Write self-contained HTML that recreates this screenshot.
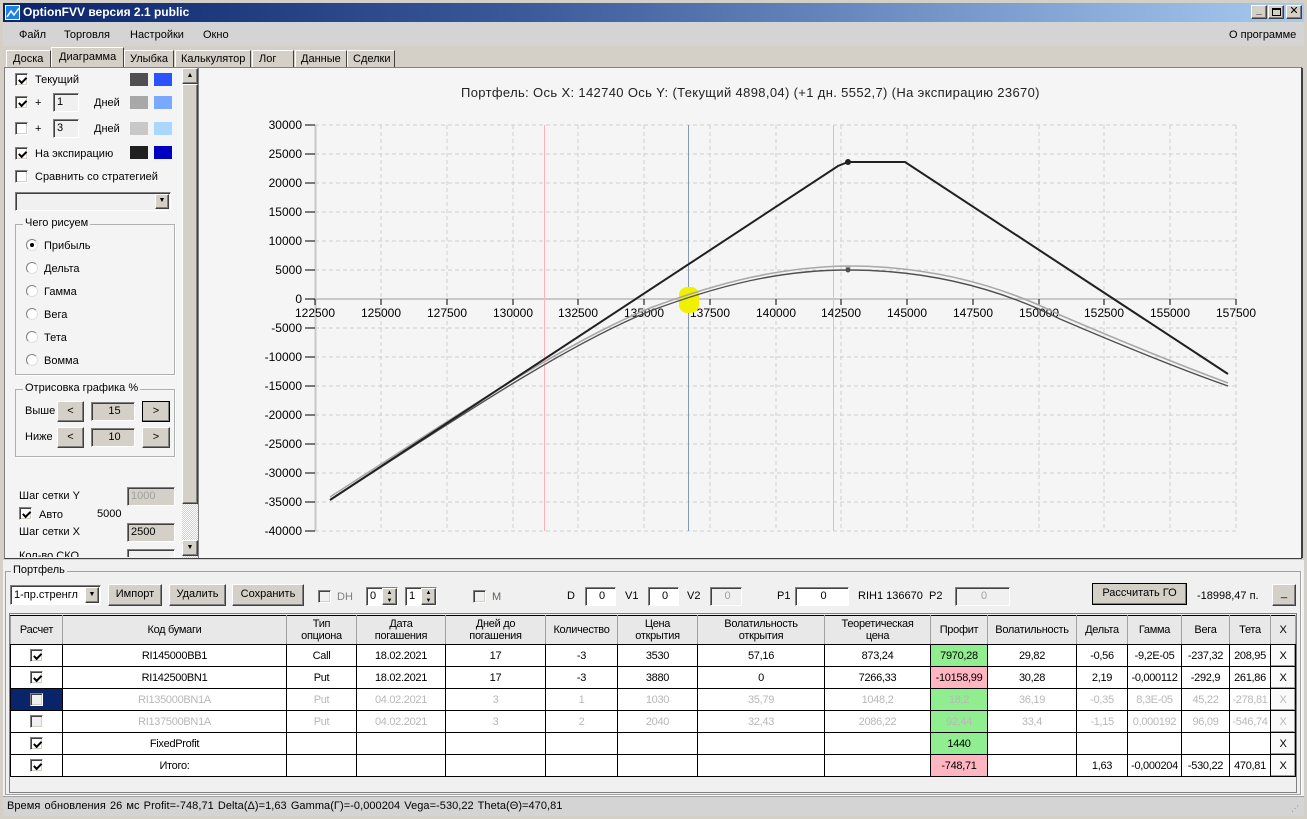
<!DOCTYPE html>
<html><head><meta charset="utf-8">
<style>
*{box-sizing:border-box;margin:0;padding:0}
body{width:1307px;height:819px;overflow:hidden;background:#d4d0c8;font-family:"Liberation Sans","DejaVu Sans",sans-serif;font-size:11px;color:#000;position:relative}
.a{position:absolute;white-space:nowrap}
.cb{position:absolute;width:13px;height:13px;background:#fff;border:1px solid #808080;border-right-color:#fff;border-bottom-color:#fff;box-shadow:inset 1px 1px 0 #404040,inset -1px -1px 0 #d4d0c8}
.cb.on::after{content:"";position:absolute;left:2px;top:1px;width:6px;height:3px;border-left:2px solid #000;border-bottom:2px solid #000;transform:rotate(-45deg) translate(-1px,2px)}
.cb.dis{background:#f0f0f0}
.rb{position:absolute;width:12px;height:12px;border-radius:50%;background:#fff;border:1px solid #808080;border-right-color:#e0e0e0;border-bottom-color:#e0e0e0}
.rb.on::after{content:"";position:absolute;left:3px;top:3px;width:4px;height:4px;border-radius:50%;background:#000}
.btn{position:absolute;background:#d4d0c8;border:1px solid;border-color:#fff #404040 #404040 #fff;box-shadow:inset -1px -1px 0 #808080;text-align:center}
.inp{position:absolute;background:#f0f0f0;border:1px solid;border-color:#808080 #fff #fff #808080;box-shadow:inset 1px 1px 0 #404040;padding-left:3px}
.grp{position:absolute;border:1px solid #b0b0b0;box-shadow:1px 1px 0 #fff}
.grp span{position:absolute;top:-8px;left:7px;background:#f4f4f4;padding:0 2px}
table{border-collapse:collapse;table-layout:fixed;position:absolute;left:10px;top:615px;font-size:11px;letter-spacing:-0.3px}
td,th{border:1px solid #000;text-align:center;font-weight:normal;overflow:hidden;white-space:nowrap;padding:0}
th{background:#e8e8e8;height:29px;line-height:12px;border-color:#000 #a0a0a0 #000 #a0a0a0}
td{height:22px;background:#fff}
tr.g td{color:#b8b8b8}
.gr{background:#90ee90!important}.pk{background:#ffb6c1!important}
.x{background:#fafafa;border:1px solid #000;box-shadow:inset -1px -1px 0 #a0a0a0}
</style></head><body>
<!-- title bar -->
<div class="a" style="left:0;top:0;width:1307px;height:3px;background:#d4d0c8"></div>
<div class="a" style="left:3px;top:3px;width:1301px;height:19px;background:linear-gradient(90deg,#0a246a,#3a5a9a 40%,#a6caf0)"></div>
<div class="a" style="left:5px;top:5px;width:15px;height:15px;background:#2080e0;border:1px solid #fff"></div>
<svg class="a" style="left:5px;top:5px" width="16" height="16"><path d="M2 12 L6 6 L9 10 L14 3" stroke="#fff" stroke-width="1.5" fill="none"/></svg>
<div class="a" style="left:23px;top:5px;color:#fff;font-weight:bold;font-size:12px">OptionFVV версия 2.1 public</div>
<div class="btn" style="left:1251px;top:5px;width:16px;height:14px;font-size:10px;line-height:9px;font-weight:bold">_</div>
<div class="btn" style="left:1268px;top:5px;width:16px;height:14px"><div style="position:absolute;left:3px;top:2px;width:9px;height:8px;border:1px solid #000;border-top-width:2px"></div></div>
<div class="btn" style="left:1286px;top:5px;width:16px;height:14px;font-size:11px;line-height:11px;font-weight:bold">✕</div>
<!-- menu -->
<div class="a" style="left:3px;top:22px;width:1301px;height:24px;background:#d4d4d4"></div>
<div class="a" style="left:19px;top:29px">Файл</div>
<div class="a" style="left:64px;top:29px">Торговля</div>
<div class="a" style="left:130px;top:29px">Настройки</div>
<div class="a" style="left:203px;top:29px">Окно</div>
<div class="a" style="left:1229px;top:29px">О программе</div>
<!-- tabs -->
<div class="a" style="left:3px;top:46px;width:1301px;height:22px;background:#d4d0c8"></div>
<div class="a" style="left:6px;top:50px;width:45px;height:17px;border:1px solid #fff;border-right-color:#404040;border-bottom:none;padding:2px 0 0 6px">Доска</div>
<div class="a" style="left:51px;top:47px;width:73px;height:21px;border:1px solid #fff;border-right-color:#404040;border-bottom:none;padding:3px 0 0 7px;background:#d4d0c8">Диаграмма</div>
<div class="a" style="left:124px;top:50px;width:50px;height:17px;border:1px solid #fff;border-right-color:#404040;border-bottom:none;padding:2px 0 0 5px">Улыбка</div>
<div class="a" style="left:175px;top:50px;width:76px;height:17px;border:1px solid #fff;border-right-color:#404040;border-bottom:none;padding:2px 0 0 5px">Калькулятор</div>
<div class="a" style="left:252px;top:50px;width:42px;height:17px;border:1px solid #fff;border-right-color:#404040;border-bottom:none;padding:2px 0 0 6px">Лог</div>
<div class="a" style="left:295px;top:50px;width:52px;height:17px;border:1px solid #fff;border-right-color:#404040;border-bottom:none;padding:2px 0 0 5px">Данные</div>
<div class="a" style="left:347px;top:50px;width:48px;height:17px;border:1px solid #fff;border-right-color:#404040;border-bottom:none;padding:2px 0 0 5px">Сделки</div>
<!-- left panel -->
<div class="a" style="left:4px;top:67px;width:1298px;height:492px;border:1px solid #808080;border-right-color:#404040;border-bottom-color:#404040;background:#f4f4f4"></div>
<div class="a" style="left:5px;top:68px;width:193px;height:490px;background:#f4f4f4"></div>
<div class="a" style="left:182px;top:68px;width:16px;height:490px;background:repeating-conic-gradient(#d4d0c8 0 25%,#fff 0 50%) 0 0/2px 2px"></div>
<div class="btn" style="left:182px;top:68px;width:16px;height:16px;font-size:7px;line-height:13px">▲</div>
<div class="btn" style="left:182px;top:84px;width:16px;height:420px"></div>
<div class="btn" style="left:182px;top:540px;width:16px;height:16px;font-size:7px;line-height:13px">▼</div>
<div class="a" style="left:198px;top:68px;width:1px;height:490px;background:#808080"></div>

<div class="cb on" style="left:15px;top:73px"></div><div class="a" style="left:35px;top:74px">Текущий</div>
<div class="a" style="left:130px;top:73px;width:18px;height:13px;background:#505050"></div><div class="a" style="left:154px;top:73px;width:18px;height:13px;background:#2a52ff"></div>
<div class="cb on" style="left:15px;top:96px"></div><div class="a" style="left:35px;top:97px">+</div>
<div class="inp" style="left:53px;top:93px;width:26px;height:19px;line-height:17px">1</div><div class="a" style="left:94px;top:97px">Дней</div>
<div class="a" style="left:130px;top:96px;width:18px;height:13px;background:#a8a8a8"></div><div class="a" style="left:154px;top:96px;width:18px;height:13px;background:#7aa8ff"></div>
<div class="cb" style="left:15px;top:122px"></div><div class="a" style="left:35px;top:123px">+</div>
<div class="inp" style="left:53px;top:119px;width:26px;height:19px;line-height:17px">3</div><div class="a" style="left:94px;top:123px">Дней</div>
<div class="a" style="left:130px;top:122px;width:18px;height:13px;background:#c8c8c8"></div><div class="a" style="left:154px;top:122px;width:18px;height:13px;background:#a8d8ff"></div>
<div class="cb on" style="left:15px;top:147px"></div><div class="a" style="left:35px;top:148px">На экспирацию</div>
<div class="a" style="left:130px;top:146px;width:18px;height:13px;background:#202020"></div><div class="a" style="left:154px;top:146px;width:18px;height:13px;background:#0000c0"></div>
<div class="cb" style="left:15px;top:170px"></div><div class="a" style="left:35px;top:171px">Сравнить со стратегией</div>
<div class="inp" style="left:15px;top:192px;width:156px;height:19px"></div>
<div class="btn" style="left:155px;top:194px;width:14px;height:15px;font-size:7px;line-height:12px">▼</div>

<div class="grp" style="left:15px;top:224px;width:160px;height:151px"><span>Чего рисуем</span></div>
<div class="rb on" style="left:26px;top:239px"></div><div class="a" style="left:44px;top:240px">Прибыль</div>
<div class="rb" style="left:26px;top:262px"></div><div class="a" style="left:44px;top:263px">Дельта</div>
<div class="rb" style="left:26px;top:285px"></div><div class="a" style="left:44px;top:286px">Гамма</div>
<div class="rb" style="left:26px;top:308px"></div><div class="a" style="left:44px;top:309px">Вега</div>
<div class="rb" style="left:26px;top:331px"></div><div class="a" style="left:44px;top:332px">Тета</div>
<div class="rb" style="left:26px;top:354px"></div><div class="a" style="left:44px;top:355px">Вомма</div>

<div class="grp" style="left:15px;top:389px;width:160px;height:68px"><span>Отрисовка графика %</span></div>
<div class="a" style="left:25px;top:405px">Выше</div>
<div class="btn" style="left:57px;top:401px;width:27px;height:21px;line-height:18px">&lt;</div>
<div class="inp" style="left:91px;top:402px;width:44px;height:19px;text-align:center;line-height:17px;background:#d4d0c8">15</div>
<div class="btn" style="left:142px;top:401px;width:28px;height:21px;line-height:18px;border-color:#000">&gt;</div>
<div class="a" style="left:25px;top:431px">Ниже</div>
<div class="btn" style="left:57px;top:427px;width:27px;height:21px;line-height:18px">&lt;</div>
<div class="inp" style="left:91px;top:428px;width:44px;height:19px;text-align:center;line-height:17px;background:#d4d0c8">10</div>
<div class="btn" style="left:142px;top:427px;width:28px;height:21px;line-height:18px">&gt;</div>

<div class="a" style="left:19px;top:490px">Шаг сетки Y</div>
<div class="inp" style="left:127px;top:487px;width:48px;height:19px;line-height:17px;color:#a0a0a0;background:#d4d0c8">1000</div>
<div class="cb on" style="left:19px;top:507px"></div><div class="a" style="left:39px;top:509px">Авто</div><div class="a" style="left:97px;top:508px">5000</div>
<div class="a" style="left:19px;top:526px">Шаг сетки X</div>
<div class="inp" style="left:127px;top:523px;width:48px;height:19px;line-height:17px;background:#d4d0c8">2500</div>
<div class="a" style="left:19px;top:550px;height:7px;overflow:hidden">Кол-во СКО</div>
<div class="inp" style="left:127px;top:549px;width:48px;height:8px;border-bottom:none"></div>

<!-- chart -->
<svg class="a" style="left:199px;top:68px" width="1102" height="490" viewBox="199 68 1102 490" font-family="Liberation Sans, sans-serif" font-size="12">
<rect x="199" y="68" width="1102" height="490" fill="#f5f5f5"/>
<text x="461" y="97" font-size="13" letter-spacing="0.35" fill="#222">Портфель: Ось X: 142740 Ось Y:  (Текущий 4898,04)  (+1 дн. 5552,7)  (На экспирацию 23670)</text>
<g stroke="#d0d0d0" stroke-dasharray="4,3" stroke-width="1">
<line x1="315" x2="1236" y1="125" y2="125"/><line x1="315" x2="1236" y1="154" y2="154"/><line x1="315" x2="1236" y1="183" y2="183"/><line x1="315" x2="1236" y1="212" y2="212"/><line x1="315" x2="1236" y1="241" y2="241"/><line x1="315" x2="1236" y1="270" y2="270"/><line x1="315" x2="1236" y1="328" y2="328"/><line x1="315" x2="1236" y1="357" y2="357"/><line x1="315" x2="1236" y1="386" y2="386"/><line x1="315" x2="1236" y1="415" y2="415"/><line x1="315" x2="1236" y1="444" y2="444"/><line x1="315" x2="1236" y1="473" y2="473"/><line x1="315" x2="1236" y1="502" y2="502"/><line x1="315" x2="1236" y1="531" y2="531"/>
<line y1="125" y2="531" x1="381" x2="381"/><line y1="125" y2="531" x1="447" x2="447"/><line y1="125" y2="531" x1="513" x2="513"/><line y1="125" y2="531" x1="578" x2="578"/><line y1="125" y2="531" x1="644" x2="644"/><line y1="125" y2="531" x1="710" x2="710"/><line y1="125" y2="531" x1="776" x2="776"/><line y1="125" y2="531" x1="841" x2="841"/><line y1="125" y2="531" x1="907" x2="907"/><line y1="125" y2="531" x1="973" x2="973"/><line y1="125" y2="531" x1="1039" x2="1039"/><line y1="125" y2="531" x1="1104" x2="1104"/><line y1="125" y2="531" x1="1170" x2="1170"/><line y1="125" y2="531" x1="1236" x2="1236"/>
</g>
<line x1="315.5" x2="315.5" y1="125" y2="531" stroke="#c8c8c8" stroke-width="2"/>
<line x1="315" x2="1236" y1="299" y2="299" stroke="#c8c8c8" stroke-width="2"/>
<g stroke="#000"><line x1="305" x2="315" y1="125" y2="125"/><line x1="305" x2="315" y1="154" y2="154"/><line x1="305" x2="315" y1="183" y2="183"/><line x1="305" x2="315" y1="212" y2="212"/><line x1="305" x2="315" y1="241" y2="241"/><line x1="305" x2="315" y1="270" y2="270"/><line x1="305" x2="315" y1="299" y2="299"/><line x1="305" x2="315" y1="328" y2="328"/><line x1="305" x2="315" y1="357" y2="357"/><line x1="305" x2="315" y1="386" y2="386"/><line x1="305" x2="315" y1="415" y2="415"/><line x1="305" x2="315" y1="444" y2="444"/><line x1="305" x2="315" y1="473" y2="473"/><line x1="305" x2="315" y1="502" y2="502"/><line x1="305" x2="315" y1="531" y2="531"/>
<line x1="315" x2="315" y1="299" y2="305"/><line x1="381" x2="381" y1="299" y2="305"/><line x1="447" x2="447" y1="299" y2="305"/><line x1="513" x2="513" y1="299" y2="305"/><line x1="578" x2="578" y1="299" y2="305"/><line x1="644" x2="644" y1="299" y2="305"/><line x1="710" x2="710" y1="299" y2="305"/><line x1="776" x2="776" y1="299" y2="305"/><line x1="841" x2="841" y1="299" y2="305"/><line x1="907" x2="907" y1="299" y2="305"/><line x1="973" x2="973" y1="299" y2="305"/><line x1="1039" x2="1039" y1="299" y2="305"/><line x1="1104" x2="1104" y1="299" y2="305"/><line x1="1170" x2="1170" y1="299" y2="305"/><line x1="1236" x2="1236" y1="299" y2="305"/></g>
<g text-anchor="end" fill="#000"><text x="302" y="129">30000</text><text x="302" y="158">25000</text><text x="302" y="187">20000</text><text x="302" y="216">15000</text><text x="302" y="245">10000</text><text x="302" y="274">5000</text><text x="302" y="303">0</text><text x="302" y="332">-5000</text><text x="302" y="361">-10000</text><text x="302" y="390">-15000</text><text x="302" y="419">-20000</text><text x="302" y="448">-25000</text><text x="302" y="477">-30000</text><text x="302" y="506">-35000</text><text x="302" y="535">-40000</text></g>
<g text-anchor="middle" fill="#000"><text x="315" y="317">122500</text><text x="381" y="317">125000</text><text x="447" y="317">127500</text><text x="513" y="317">130000</text><text x="578" y="317">132500</text><text x="644" y="317">135000</text><text x="710" y="317">137500</text><text x="776" y="317">140000</text><text x="841" y="317">142500</text><text x="907" y="317">145000</text><text x="973" y="317">147500</text><text x="1039" y="317">150000</text><text x="1104" y="317">152500</text><text x="1170" y="317">155000</text><text x="1236" y="317">157500</text></g>
<line x1="544.5" x2="544.5" y1="125" y2="531" stroke="#ffb0b8"/>
<line x1="833.5" x2="833.5" y1="125" y2="531" stroke="#ffb0b8"/>
<line x1="688.5" x2="688.5" y1="125" y2="531" stroke="#8898b0"/>
<rect x="679" y="287" width="20" height="26" rx="8" fill="#f0f000"/>
<path d="M330 497 C450 420 560 345 650 308 C720 282 780 267 848 266 C930 266 1000 285 1060 315 C1130 345 1180 365 1228 383" stroke="#a8a8a8" stroke-width="1.6" fill="none"/>
<path d="M330 500 C450 423 560 348 650 311 C720 285 780 270 848 270 C930 270 1000 289 1060 319 C1130 349 1180 369 1228 386" stroke="#505050" stroke-width="1.4" fill="none"/>
<circle cx="848" cy="268" r="2.5" fill="#a8a8a8"/><circle cx="848" cy="270" r="2.5" fill="#505050"/>
<polyline points="330,500 838,166 848,162 905,162 1228,374" stroke="#202020" stroke-width="2" fill="none"/>
<circle cx="848" cy="162" r="3" fill="#202020"/>
</svg>
<div class="a" style="left:1301px;top:68px;width:2px;height:490px;background:#404040"></div>

<!-- portfolio -->
<div class="a" style="left:3px;top:560px;width:1301px;height:236px;background:#f0f0f0"></div>
<div class="grp" style="left:5px;top:571px;width:1296px;height:224px;border-color:#a0a0a0"><span style="background:#f0f0f0;left:5px">Портфель</span></div>
<div class="inp" style="left:10px;top:585px;width:91px;height:20px;background:#fff;line-height:18px">1-пр.стренгл</div>
<div class="btn" style="left:85px;top:587px;width:14px;height:16px;font-size:7px;line-height:13px">▼</div>
<div class="btn" style="left:108px;top:584px;width:54px;height:22px;line-height:19px">Импорт</div>
<div class="btn" style="left:169px;top:584px;width:57px;height:22px;line-height:19px">Удалить</div>
<div class="btn" style="left:232px;top:584px;width:72px;height:22px;line-height:19px">Сохранить</div>
<div class="cb dis" style="left:318px;top:590px"></div><div class="a" style="left:337px;top:591px;color:#808080">DH</div>
<div class="inp" style="left:366px;top:587px;width:32px;height:19px;background:#fff;line-height:17px">0</div><div class="btn" style="left:382px;top:588px;width:15px;height:17px;font-size:6px;line-height:8px">▲<br>▼</div>
<div class="inp" style="left:405px;top:587px;width:32px;height:19px;background:#fff;line-height:17px">1</div><div class="btn" style="left:421px;top:588px;width:15px;height:17px;font-size:6px;line-height:8px">▲<br>▼</div>
<div class="cb dis" style="left:473px;top:590px"></div><div class="a" style="left:492px;top:591px;color:#606060">M</div>
<div class="a" style="left:567px;top:590px">D</div><div class="inp" style="left:585px;top:587px;width:31px;height:19px;background:#fff;text-align:center;line-height:17px">0</div>
<div class="a" style="left:625px;top:590px">V1</div><div class="inp" style="left:648px;top:587px;width:31px;height:19px;background:#fff;text-align:center;line-height:17px">0</div>
<div class="a" style="left:687px;top:590px">V2</div><div class="inp" style="left:710px;top:587px;width:32px;height:19px;text-align:center;line-height:17px;color:#a0a0a0">0</div>
<div class="a" style="left:777px;top:590px">P1</div><div class="inp" style="left:795px;top:587px;width:54px;height:19px;background:#fff;text-align:center;line-height:17px">0</div>
<div class="a" style="left:858px;top:590px">RIH1 136670</div><div class="a" style="left:929px;top:590px">P2</div>
<div class="inp" style="left:955px;top:587px;width:55px;height:19px;text-align:center;line-height:17px;color:#a0a0a0">0</div>
<div class="btn" style="left:1092px;top:583px;width:95px;height:22px;line-height:19px;border-color:#000">Рассчитать ГО</div>
<div class="a" style="left:1197px;top:590px">-18998,47 п.</div>
<div class="btn" style="left:1272px;top:584px;width:24px;height:22px;line-height:17px">_</div>

<div class="a" style="left:9px;top:613px;width:1288px;height:180px;border:1px solid #808080;background:#f0f0f0"></div>
<table>
<colgroup><col style="width:52px"><col style="width:224px"><col style="width:70px"><col style="width:89px"><col style="width:100px"><col style="width:72px"><col style="width:80px"><col style="width:127px"><col style="width:106px"><col style="width:57px"><col style="width:89px"><col style="width:51px"><col style="width:54px"><col style="width:48px"><col style="width:41px"><col style="width:25px"></colgroup>
<tr><th>Расчет</th><th>Код бумаги</th><th>Тип<br>опциона</th><th>Дата<br>погашения</th><th>Дней до<br>погашения</th><th>Количество</th><th>Цена<br>открытия</th><th>Волатильность<br>открытия</th><th>Теоретическая<br>цена</th><th>Профит</th><th>Волатильность</th><th>Дельта</th><th>Гамма</th><th>Вега</th><th>Тета</th><th>X</th></tr>
<tr><td><div class="cb on" style="position:relative;display:inline-block;vertical-align:middle"></div></td><td>RI145000BB1</td><td>Call</td><td>18.02.2021</td><td>17</td><td>-3</td><td>3530</td><td>57,16</td><td>873,24</td><td class="gr">7970,28</td><td>29,82</td><td>-0,56</td><td>-9,2E-05</td><td>-237,32</td><td>208,95</td><td class="x">X</td></tr>
<tr><td><div class="cb on" style="position:relative;display:inline-block;vertical-align:middle"></div></td><td>RI142500BN1</td><td>Put</td><td>18.02.2021</td><td>17</td><td>-3</td><td>3880</td><td>0</td><td>7266,33</td><td class="pk">-10158,99</td><td>30,28</td><td>2,19</td><td>-0,000112</td><td>-292,9</td><td>261,86</td><td class="x">X</td></tr>
<tr class="g"><td style="background:#0a246a"><div class="cb dis" style="position:relative;display:inline-block;vertical-align:middle"></div></td><td>RI135000BN1A</td><td>Put</td><td>04.02.2021</td><td>3</td><td>1</td><td>1030</td><td>35,79</td><td>1048,2</td><td class="gr">18,2</td><td>36,19</td><td>-0,35</td><td>8,3E-05</td><td>45,22</td><td>-278,81</td><td class="x">X</td></tr>
<tr class="g"><td><div class="cb dis" style="position:relative;display:inline-block;vertical-align:middle"></div></td><td>RI137500BN1A</td><td>Put</td><td>04.02.2021</td><td>3</td><td>2</td><td>2040</td><td>32,43</td><td>2086,22</td><td class="gr">92,44</td><td>33,4</td><td>-1,15</td><td>0,000192</td><td>96,09</td><td>-546,74</td><td class="x">X</td></tr>
<tr><td><div class="cb on" style="position:relative;display:inline-block;vertical-align:middle"></div></td><td>FixedProfit</td><td></td><td></td><td></td><td></td><td></td><td></td><td></td><td class="gr">1440</td><td></td><td></td><td></td><td></td><td></td><td class="x">X</td></tr>
<tr><td><div class="cb on" style="position:relative;display:inline-block;vertical-align:middle"></div></td><td>Итого:</td><td></td><td></td><td></td><td></td><td></td><td></td><td></td><td class="pk">-748,71</td><td></td><td>1,63</td><td>-0,000204</td><td>-530,22</td><td>470,81</td><td class="x">X</td></tr>
</table>
<!-- status -->
<div class="a" style="left:3px;top:796px;width:1301px;height:20px;background:#d4d4d4;border-top:1px solid #a0a0a0"></div>
<div class="a" style="left:7px;top:800px;font-size:11px;letter-spacing:0.05px;word-spacing:1px">Время обновления 26 мс  Profit=-748,71 Delta(Δ)=1,63 Gamma(Γ)=-0,000204 Vega=-530,22 Theta(Θ)=470,81</div>
<div class="a" style="left:1291px;top:804px;color:#808080;font-size:8px">⋰</div>
</body></html>
